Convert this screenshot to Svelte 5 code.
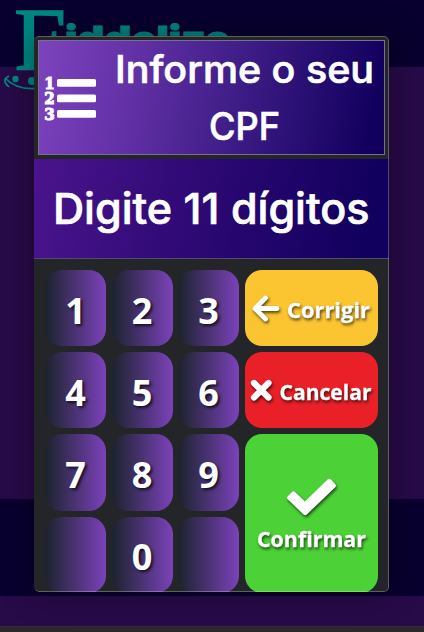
<script>
  const rows = [['1', '2', '3'], ['4', '5', '6'], ['7', '8', '9'], ['', '0', '']];
</script>

<div class="screen">
  <header class="top">
    <svg class="logo" width="240" height="100" viewBox="0 0 240 100" fill="#008783">
      <text x="14" y="69" class="initial" textLength="52" lengthAdjust="spacingAndGlyphs">F</text>
      <text x="65" y="51.5" class="brand" textLength="165" lengthAdjust="spacingAndGlyphs">iddelize</text>
      <circle cx="15.5" cy="79" r="3.2" />
      <circle cx="32" cy="81" r="4" />
      <path d="M9 76Q3 79 5.5 83T9 86M5 78Q17 91 40 88" fill="none" stroke="#008783" stroke-width="1.8" />
    </svg>
  </header>
  <div class="middle"></div>
  <div class="lower"></div>
  <div class="base"></div>
  <footer></footer>

  <section class="modal">
    <div class="head">
      <div class="title">
        <svg width="345" height="113" viewBox="0 0 345 113" fill="#fff">
          <g class="nums">
            <text x="5.3" y="47.8" textLength="10.5" lengthAdjust="spacingAndGlyphs">1</text>
            <text x="5.3" y="63.3" textLength="10.5" lengthAdjust="spacingAndGlyphs">2</text>
            <text x="5.3" y="78.8" textLength="10.5" lengthAdjust="spacingAndGlyphs">3</text>
          </g>
          <rect x="18" y="38" width="39" height="7.8" rx="1.5" />
          <rect x="18" y="53.5" width="39" height="7.8" rx="1.5" />
          <rect x="18" y="69" width="39" height="7.8" rx="1.5" />
          <text class="heading" x="76" y="41.8" textLength="259" lengthAdjust="spacingAndGlyphs">Informe o seu</text>
          <text class="heading" x="170" y="98.5" textLength="71" lengthAdjust="spacingAndGlyphs">CPF</text>
        </svg>
      </div>
    </div>
    <div class="display">
      <svg width="352" height="98" viewBox="0 0 352 98" fill="#fff">
        <text class="prompt" x="17" y="65.2" textLength="316.500" lengthAdjust="spacingAndGlyphs">Digite 11 dígitos</text>
      </svg>
    </div>
    <div class="pad">
      <div class="digits">
        {#each rows as row}
          {#each row as n}
            <button class="key">{n}</button>
          {/each}
        {/each}
      </div>
      <div class="actions">
        <button class="fix" aria-label="Corrigir">
          <svg width="133" height="76" viewBox="0 0 133 76">
            <path d="M32 38.5H10M20.5 28L10 38.5L20.5 49" fill="none" stroke="#fff" stroke-width="4.8" stroke-linecap="round" stroke-linejoin="round" />
            <text x="42" y="48" textLength="83" lengthAdjust="spacingAndGlyphs">Corrigir</text>
          </svg>
        </button>
        <button class="cancel" aria-label="Cancelar">
          <svg width="133" height="76" viewBox="0 0 133 76">
            <path d="M9 31L23.500 45.500M23.500 31L9 45.500" stroke="#fff" stroke-width="6.2" stroke-linecap="round" />
            <text x="34.5" y="48" textLength="92" lengthAdjust="spacingAndGlyphs">Cancelar</text>
          </svg>
        </button>
        <button class="confirm" aria-label="Confirmar">
          <svg width="133" height="159" viewBox="0 0 133 159">
            <path d="M42.5 62.5L47 58Q48.5 56.5 50 58L60 67.5L82.5 45.5Q84.5 44 86.5 46L90.5 50.5Q91.5 52 90 53.5L61.5 80.8Q60 82 58.5 80.5L42.5 65Q41 63.5 42.5 62.5Z" fill="#fff" />
            <text x="12" y="113" textLength="109" lengthAdjust="spacingAndGlyphs">Confirmar</text>
          </svg>
        </button>
      </div>
    </div>
  </section>
</div>

<style>
  .screen { position: relative; width: 424px; height: 632px; overflow: hidden; display: flex; flex-direction: column; font-family: "Open Sans", sans-serif; }
  svg { display: block; }
  .top { height: 67px; background: #08002f; position: relative; }
  .logo { position: absolute; left: 0; top: 0; }
  .initial { font: 400 88px "Liberation Serif", serif; stroke: #008783; stroke-width: 1.5px; }
  .brand { font: 900 36px Inter, sans-serif; stroke: #008783; stroke-width: 1px; }
  .middle { height: 432px; background: #270a48; }
  .lower { height: 97px; background: #08002f; }
  .base { height: 30px; background: #270a48; }
  footer { height: 6px; background: #292929; border-top: 1px solid #302e32; box-sizing: border-box; }
  .modal { position: absolute; left: 34px; top: 36px; width: 355px; height: 556px; box-sizing: border-box; overflow: hidden; background: #232529; border-radius: 5px; box-shadow: 0 0 32px rgba(0, 0, 0, 0.4); display: flex; flex-direction: column; }
  .modal::after { content: ""; position: absolute; inset: 0; border: 1px solid rgba(255, 255, 255, 0.27); border-left-color: transparent; border-radius: 5px; pointer-events: none; }
  .head { height: 123px; padding: 4px; box-sizing: border-box; flex: none; }
  .title { height: 115px; border: 1px solid #77708a; box-sizing: border-box; background: linear-gradient(100deg, #7c43bd 0%, #6532a8 25%, #3d1c85 58%, #12005e 95%); overflow: hidden; }
  .nums { font: 700 16.5px "DejaVu Serif", serif; stroke: #fff; stroke-width: 1.1px; }
  .heading { font: 500 38px Inter, sans-serif; stroke: #fff; stroke-width: 0.7px; }
  .display { height: 100px; box-sizing: border-box; border-bottom: 1px solid #514a78; padding-left: 2px; background: linear-gradient(100deg, #4a148c 0%, #2b0872 50%, #12005e 92%); flex: none; }
  .prompt { font: 500 43px Inter, sans-serif; stroke: #fff; stroke-width: 0.7px; }
  .pad { display: flex; gap: 6px; padding: 11px 11px 0; }
  .digits { width: 194px; display: grid; grid-template-columns: repeat(3, 61px); column-gap: 5.5px; grid-auto-rows: 76.3px; row-gap: 5.9px; flex: none; }
  .actions { width: 133px; display: grid; grid-template-rows: 76.3px 76.3px 158.5px; row-gap: 5.9px; flex: none; }
  button { border: 0; padding: 0; margin: 0; border-radius: 17px; color: #fff; font: 700 36px "Open Sans", sans-serif; text-shadow: 2px 2px 3px rgba(0, 0, 0, 0.7); overflow: hidden; }
  .key { background: linear-gradient(90deg, #1b232d 0%, #7b42ba 100%); padding-top: 4px; }
  .actions text { font: 700 21.5px "Open Sans", sans-serif; fill: #fff; stroke: #fff; stroke-width: 0.3px; }
  .actions svg { filter: drop-shadow(1.5px 2px 1.5px rgba(0, 0, 0, 0.65)); text-shadow: none; }
  .fix { background: #fbc531; }
  .cancel { background: #e92027; }
  .confirm { background: #4cd137; }
</style>
